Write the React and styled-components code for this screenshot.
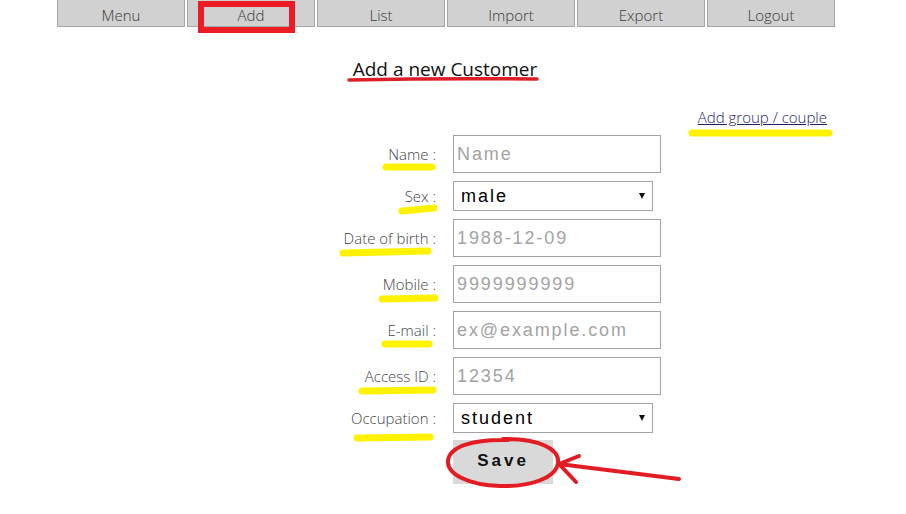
import React from "react";
import styled, { createGlobalStyle } from "styled-components";

const GlobalStyle = createGlobalStyle`
  html, body { margin: 0; padding: 0; background: #ffffff; }
  body { font-family: "Open Sans", "Liberation Sans", sans-serif; }
  * { box-sizing: border-box; }
`;

const Page = styled.div`
  position: relative;
  width: 906px;
  height: 514px;
  overflow: hidden;
  background: #fff;
`;

const Nav = styled.nav`
  display: flex;
  gap: 2px;
  margin-left: 57px;
  width: 780px;
`;

const NavButton = styled.div`
  width: 128px;
  height: 27px;
  background: #d1d1d1;
  border: 1px solid #a6a6a6;
  border-top: none;
  font-family: "Open Sans", sans-serif;
  font-weight: 300;
  font-size: 15px;
  line-height: 20px;
  padding-top: 5px;
  color: #3a3a3a;
  text-align: center;
`;

const Content = styled.main`
  width: 780px;
  margin-left: 55px;
  display: flex;
  flex-direction: column;
`;

const Title = styled.h1`
  margin: 30px 0 0;
  text-align: center;
  font-family: "Open Sans", sans-serif;
  font-weight: 400;
  font-size: 19px;
  line-height: 24px;
  color: #111;
`;

const LinkRow = styled.div`
  display: flex;
  justify-content: flex-end;
  padding-right: 8px;
  margin-top: 26px;
`;

const GroupLink = styled.a`
  font-family: "Open Sans", sans-serif;
  font-weight: 300;
  font-size: 15px;
  line-height: 20px;
  color: #1e1e70;
  text-decoration: underline;
`;

const Form = styled.form`
  display: grid;
  grid-template-columns: 150px 208px;
  column-gap: 17px;
  row-gap: 8px;
  margin: 8px 0 0 231px;
  align-items: center;
`;

const Label = styled.label`
  text-align: right;
  font-family: "Open Sans", sans-serif;
  font-weight: 300;
  font-size: 15px;
  color: #444;
`;

const TextInput = styled.input`
  width: 208px;
  height: 38px;
  border: 1px solid #a3a3a3;
  padding: 0 3px;
  font-family: "Liberation Sans", Arial, sans-serif;
  font-size: 18px;
  letter-spacing: 1.9px;
  color: #111;
  outline: none;
  &::placeholder { color: #a3a3a3; }
`;

const SelectWrap = styled.div`
  position: relative;
  width: 200px;
  height: 30px;
  &::after {
    content: "";
    position: absolute;
    right: 8px;
    top: 12px;
    border-left: 3px solid transparent;
    border-right: 3px solid transparent;
    border-top: 6px solid #111;
    pointer-events: none;
  }
`;

const Select = styled.select`
  appearance: none;
  width: 200px;
  height: 30px;
  border: 1px solid #a3a3a3;
  border-radius: 0;
  background: #fff;
  padding: 0 7px;
  font-family: "Liberation Sans", Arial, sans-serif;
  font-size: 18px;
  letter-spacing: 2px;
  color: #000;
  outline: none;
`;

const SaveButton = styled.button`
  grid-column: 2;
  justify-self: start;
  margin-top: -1px;
  width: 100px;
  height: 44px;
  border: none;
  background: #d9d9d9;
  font-family: "Liberation Sans", Arial, sans-serif;
  font-weight: 700;
  font-size: 17px;
  letter-spacing: 3px;
  color: #111;
  padding: 0 0 2px;
`;

const Marks = styled.svg`
  position: absolute;
  left: 0;
  top: 0;
  width: 906px;
  height: 514px;
  pointer-events: none;
`;

const fields = [
  { label: "Name :", type: "text", ph: "Name" },
  { label: "Sex :", select: ["male", "female"] },
  { label: "Date of birth :", type: "text", ph: "1988-12-09" },
  { label: "Mobile :", type: "text", ph: "9999999999" },
  { label: "E-mail :", type: "text", ph: "ex@example.com" },
  { label: "Access ID :", type: "text", ph: "12354" },
  { label: "Occupation :", select: ["student", "employee", "other"] },
];

const yellow = [
  [386, 167, 432, 167],
  [402, 211, 434, 208],
  [343, 253, 428, 251],
  [382, 299, 435, 298],
  [385, 344, 429, 344],
  [362, 391, 433, 390],
  [357, 438, 430, 437],
  [692, 133, 829, 133],
];

export default function App() {
  return (
    <>
      <GlobalStyle />
      <Page>
        <Nav>
          {["Menu", "Add", "List", "Import", "Export", "Logout"].map((n) => (
            <NavButton key={n}>{n}</NavButton>
          ))}
        </Nav>
        <Content>
          <Title>Add a new Customer</Title>
          <LinkRow>
            <GroupLink href="#">Add group / couple</GroupLink>
          </LinkRow>
          <Form onSubmit={(e) => e.preventDefault()}>
            {fields.map((f) => (
              <React.Fragment key={f.label}>
                <Label>{f.label}</Label>
                {f.select ? (
                  <SelectWrap>
                    <Select defaultValue={f.select[0]}>
                      {f.select.map((o) => (
                        <option key={o}>{o}</option>
                      ))}
                    </Select>
                  </SelectWrap>
                ) : (
                  <TextInput type={f.type} placeholder={f.ph} />
                )}
              </React.Fragment>
            ))}
            <SaveButton type="submit">Save</SaveButton>
          </Form>
        </Content>
        <Marks viewBox="0 0 906 514">
          <rect x="201" y="4" width="91" height="26" fill="none" stroke="#ed1c24" strokeWidth="6" />
          <path d="M349 80 Q440 78 537 79" fill="none" stroke="#dc1f26" strokeWidth="3.5" strokeLinecap="round" />
          {yellow.map(([x1, y1, x2, y2], i) => (
            <line key={i} x1={x1} y1={y1} x2={x2} y2={y2} stroke="#fff200" strokeWidth="7" strokeLinecap="round" />
          ))}
          <path
            d="M503 439 C540 438 560 450 558 463 C556 478 530 487 500 486 C468 485 447 474 448 461 C449 447 472 439 508 440"
            fill="none"
            stroke="#e31c24"
            strokeWidth="4"
            strokeLinecap="round"
          />
          <path d="M679 479 L559 464 M559 464 L579 456 M559 464 L576 482" fill="none" stroke="#e31c24" strokeWidth="4" strokeLinecap="round" />
        </Marks>
      </Page>
    </>
  );
}
